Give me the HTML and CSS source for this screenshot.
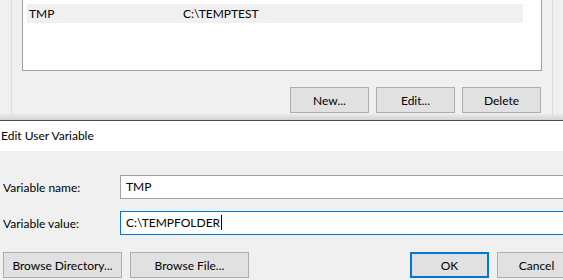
FILE: index.html
```html
<!DOCTYPE html>
<html lang="en">
<head>
    <meta charset="UTF-8">
    <title>Environment Variables</title>
    <link rel="stylesheet" href="styles.css">
</head>
<body>
    <div class="parent">
        <div class="frame">
            <div class="var-list">
                <div class="var-row selected">
                    <span class="var-name">TMP</span>
                    <span class="var-value">C:\TEMPTEST</span>
                </div>
            </div>
            <div class="button-group">
                <button class="btn">New...</button>
                <button class="btn">Edit...</button>
                <button class="btn">Delete</button>
            </div>
        </div>
    </div>

    <div class="dialog">
        <div class="title-bar">Edit User Variable</div>
        <div class="dialog-body">
            <div class="field">
                <label class="field-label">Variable name:</label>
                <div class="field-input">TMP</div>
            </div>
            <div class="field">
                <label class="field-label">Variable value:</label>
                <div class="field-input focused">C:\TEMPFOLDER<span class="caret"></span></div>
            </div>
            <div class="dialog-buttons">
                <button class="btn wide">Browse Directory...</button>
                <button class="btn wide">Browse File...</button>
                <span class="spacer"></span>
                <button class="btn default">OK</button>
                <button class="btn">Cancel</button>
            </div>
        </div>
    </div>
</body>
</html>
```

FILE: styles.css
```css
html, body {
    margin: 0;
    padding: 0;
    width: 563px;
    height: 280px;
    overflow: hidden;
}
body {
    font-family: Lato, "Open Sans", "Liberation Sans", sans-serif;
    font-size: 12px;
    color: #000;
    background: #f0f0f0;
}

/* window behind */
.parent {
    height: 120px;
    background: linear-gradient(to bottom, #f0f0f0 0, #f0f0f0 113px, #d2d2d2 120px);
}
.frame {
    margin-left: 11px;
    width: 520px;
    height: 115px;
    padding: 0 10px;
    border-left: 1px solid #dcdcdc;
    border-right: 1px solid #dcdcdc;
}
.var-list {
    height: 66px;
    padding-top: 4px;
    background: #fff;
    border: 1px solid #a0a0a0;
    border-top: none;
}
.var-row {
    display: flex;
    height: 19px;
    line-height: 19px;
    margin: 0 18px 0 4px;
    padding-left: 2px;
}
.var-row.selected {
    background: #f0f0f0;
}
.var-name {
    width: 154px;
}
.button-group {
    display: flex;
    justify-content: flex-end;
    gap: 7px;
    margin-top: 16px;
    padding-right: 1px;
}

.btn {
    width: 79px;
    height: 26px;
    padding: 0;
    background: #e1e1e1;
    border: 1px solid #adadad;
    border-radius: 0;
    font-family: inherit;
    font-size: 12px;
    color: #000;
}
.btn.wide {
    width: 119px;
}
.btn.default {
    border: 2px solid #0078d7;
}

/* edit dialog */
.dialog {
    width: 576px;
    border-top: 1px solid #4c4c4c;
}
.title-bar {
    height: 30px;
    line-height: 30px;
    padding-left: 1px;
    background: #fff;
}
.dialog-body {
    padding: 24px 0 0 3px;
}
.field {
    display: flex;
    align-items: center;
    margin-bottom: 12px;
}
.field-label {
    width: 117px;
}
.field-input {
    flex: 1;
    height: 22px;
    line-height: 22px;
    padding-left: 5px;
    background: #fff;
    border: 1px solid #a0a0a0;
}
.field-input.focused {
    border-color: #0078d7;
}
.caret {
    display: inline-block;
    width: 1px;
    height: 15px;
    margin-left: 1px;
    vertical-align: -3px;
    background: #000;
}
.dialog-buttons {
    display: flex;
    gap: 8px;
    margin-top: 17px;
}
.spacer {
    flex: 1;
}
```
